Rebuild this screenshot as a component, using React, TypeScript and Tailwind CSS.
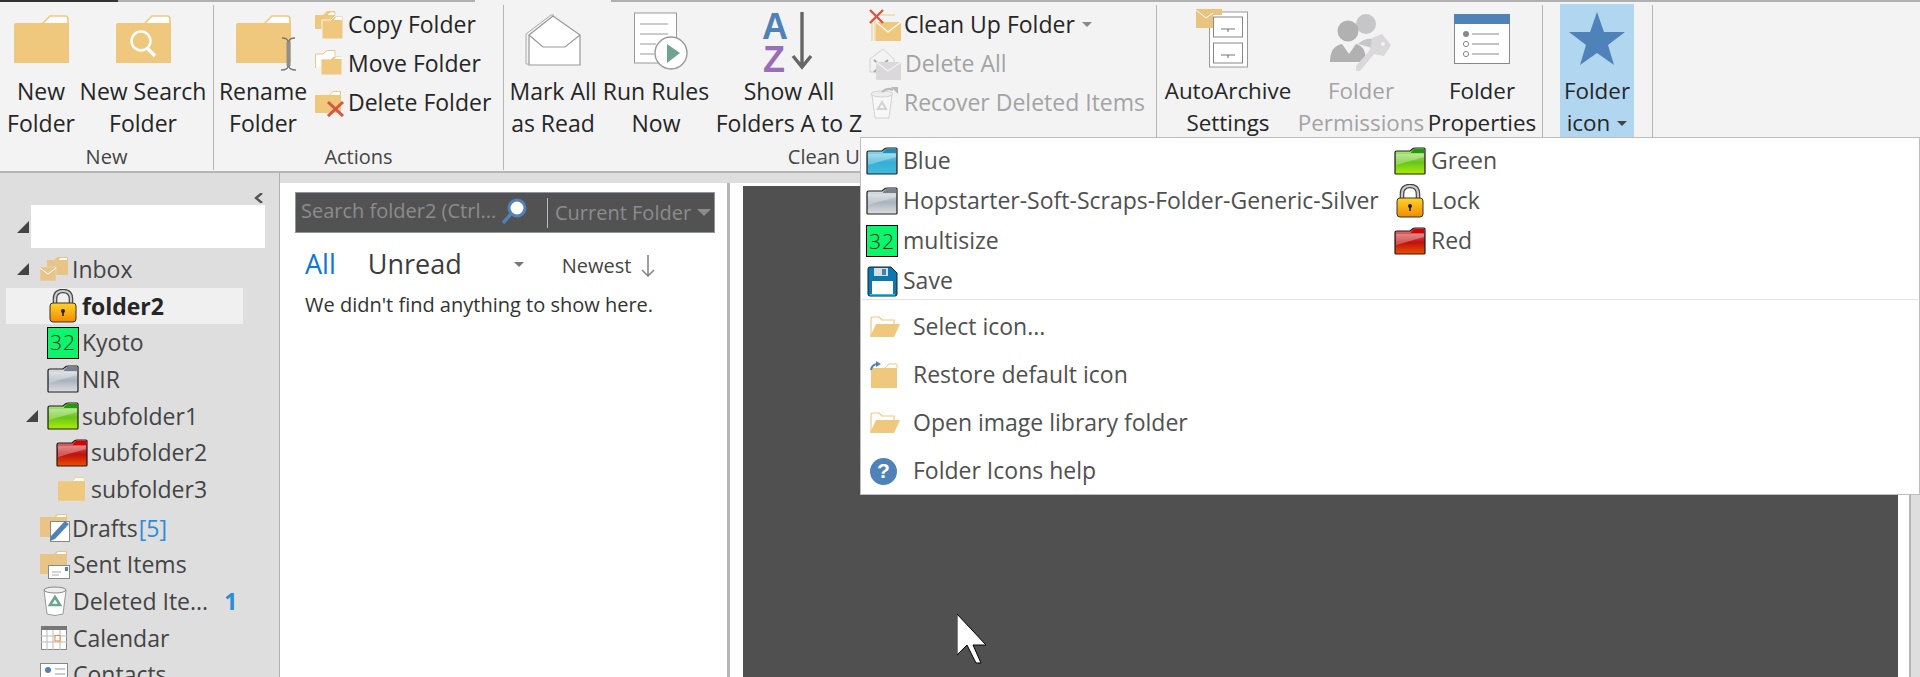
import type { ReactNode } from "react";

const PEACH = "#efc87e";

const Folder = ({ className = "", w = 55, h = 48 }: { className?: string; w?: number; h?: number }) => (
  <svg width={w} height={h} viewBox="0 0 55 48" className={`block flex-none ${className}`}>
    <path d="M28 9 L36 1 H51 Q54 1 54 4 V9 Z" fill="#fff" stroke={PEACH} strokeWidth="1.6" />
    <path d="M0 10 Q0 8 2 8 H55 V48 H0 Z" fill={PEACH} />
  </svg>
);

const palette = {
  blue: { a: "#a8e2f2", b: "#38aed2", c: "#3ebce2", tab: "#1f8fb5" },
  silver: { a: "#e9ecef", b: "#a9b2bc", c: "#dcdfe3", tab: "#77808c" },
  green: { a: "#bdec92", b: "#68c41e", c: "#a8f000", tab: "#1f9a10" },
  red: { a: "#e88080", b: "#bf1010", c: "#ee5000", tab: "#d80000" },
};

const GlossFolder = ({ color, className = "" }: { color: keyof typeof palette; className?: string }) => {
  const p = palette[color];
  const id = `gloss-${color}`;
  return (
    <svg width="32" height="28" viewBox="0 0 32 28" className={`block flex-none ${className}`}>
      <defs>
        <linearGradient id={id} x1="0" y1="0" x2="0" y2="1">
          <stop offset="0" stopColor={p.a} />
          <stop offset="0.55" stopColor={p.b} />
          <stop offset="1" stopColor={p.c} />
        </linearGradient>
      </defs>
      <path d="M1 6 Q1 4 3 4 H16 L19 1.5 Q20 1 21 1 H30 Q31 1 31 2 V26 Q31 27 30 27 H2 Q1 27 1 26 Z" fill={`url(#${id})`} stroke="#1c1c1c" strokeWidth="1.2" />
      <path d="M17 5 L20 2 H30 V6 H17 Z" fill={p.tab} />
      <path d="M2 7 H30 V10 L2 18 Z" fill="#fff" opacity="0.3" />
    </svg>
  );
};

const Lock = ({ className = "" }: { className?: string }) => (
  <svg width="28" height="34" viewBox="0 0 28 34" className={`block flex-none ${className}`}>
    <defs>
      <linearGradient id="lock-body" x1="0" y1="0" x2="0" y2="1">
        <stop offset="0" stopColor="#ffd428" />
        <stop offset="1" stopColor="#f48a00" />
      </linearGradient>
    </defs>
    <path d="M6 15 V10 Q6 2 14 2 Q22 2 22 10 V15" fill="none" stroke="#444" strokeWidth="4.6" />
    <path d="M6 15 V10 Q6 2 14 2 Q22 2 22 10 V15" fill="none" stroke="#c9ccd0" strokeWidth="2.2" />
    <rect x="1" y="14" width="26" height="19" rx="3" fill="url(#lock-body)" stroke="#333" />
    <circle cx="14" cy="22" r="2" fill="#222" />
    <rect x="13.2" y="22" width="1.6" height="5" fill="#222" />
  </svg>
);

const Box32 = () => (
  <div className="flex h-[32px] w-[32px] flex-none items-center justify-center border border-black bg-[#0cf56b] font-['Open_Sans',sans-serif] text-[21px] leading-none font-light tracking-[1px] text-[#032]">
    32
  </div>
);

const Floppy = () => (
  <svg width="31" height="31" viewBox="0 0 31 31" className="block flex-none">
    <path d="M3 1 H24 L30 7 V28 Q30 30 28 30 H3 Q1 30 1 28 V3 Q1 1 3 1 Z" fill="#0c78ad" stroke="#123" />
    <rect x="7" y="2" width="14" height="8" fill="#d9dee3" />
    <rect x="15" y="3" width="4" height="6" fill="#3a86ad" />
    <rect x="5" y="15" width="21" height="13" fill="#fff" />
    <rect x="3" y="28" width="25" height="1.5" fill="#17cbe6" />
  </svg>
);

const OpenFolder = () => (
  <svg width="30" height="22" viewBox="0 0 30 22" className="block flex-none">
    <path d="M1 21 V3 Q1 1 3 1 H9 L12 4 H24 V8" fill="#fff" stroke={PEACH} strokeWidth="1.2" />
    <path d="M6 8 H30 L24 21 H0 Z" fill={PEACH} />
  </svg>
);

const RestoreFolder = () => (
  <svg width="28" height="28" viewBox="0 0 28 28" className="block flex-none">
    <path d="M1 8 Q1 7 3 7 H27 V27 H1 Z" fill={PEACH} />
    <path d="M15 7 L19 3 H26 Q27 3 27 4 V7" fill="#fff" stroke={PEACH} />
    <path d="M1 9 Q2 3 8 3" fill="none" stroke="#4e82b8" strokeWidth="2" />
    <path d="M6 0 L11 3 L6 6 Z" fill="#4e82b8" />
  </svg>
);

const HelpIcon = () => (
  <div className="flex h-[27px] w-[27px] flex-none items-center justify-center rounded-full bg-[#4e82b8] font-['Liberation_Sans',sans-serif] text-[21px] font-bold text-white">
    ?
  </div>
);

const Star = () => (
  <svg width="56" height="53" viewBox="0 0 56 53" className="mt-[7px] block">
    <path d="M28 0 L35 20 H56 L39 33 L45 53 L28 41 L11 53 L17 33 L0 20 H21 Z" fill="#4e82b8" />
  </svg>
);

const SearchFolder = () => (
  <div className="relative mt-[10px]">
    <Folder />
    <svg width="28" height="34" viewBox="0 0 28 34" className="absolute top-[14px] left-[13px]">
      <circle cx="12" cy="12" r="9.5" fill="none" stroke="#fff" strokeWidth="2.4" />
      <path d="M18 19 L26 27" stroke="#fff" strokeWidth="3.6" />
    </svg>
  </div>
);

const RenameIcon = () => (
  <svg width="60" height="56" viewBox="0 0 60 56" className="mt-[10px] ml-[5px] block">
    <path d="M28 9 L36 1 H51 Q54 1 54 4 V9 Z" fill="#fff" stroke={PEACH} strokeWidth="1.6" />
    <path d="M0 10 Q0 8 2 8 H55 V48 H0 Z" fill={PEACH} />
    <path d="M46 23 Q52 23 52 27 V51 Q52 55 45 55 M59 23 Q53 23 53 27 V51 Q53 55 60 55" fill="none" stroke="#777" strokeWidth="1.4" />
    <rect x="50.5" y="27" width="4" height="24" fill="#8f8f8f" />
  </svg>
);

const MarkAllIcon = () => (
  <svg width="56" height="54" viewBox="0 0 56 54" className="mt-[9px] block">
    <path d="M1 20 L26 1 L29 1" fill="none" stroke="#aaa" />
    <path d="M4 21 L28 2 L55 21 V51 H4 Z" fill="#fff" stroke="#999" strokeWidth="1.2" />
    <path d="M4 21 L18 33 H40 L55 21" fill="none" stroke="#999" strokeWidth="1.2" />
    <path d="M1 20 V50 H4" fill="none" stroke="#aaa" />
  </svg>
);

const RunRulesIcon = () => (
  <svg width="56" height="60" viewBox="0 0 56 60" className="mt-[5px] ml-[12px] block">
    <rect x="0.5" y="3" width="42" height="50" fill="#fff" stroke="#999" />
    <path d="M6 14 H34 M6 24 H34 M6 34 H22 M6 44 H20" stroke="#999" />
    <circle cx="37" cy="43" r="16" fill="#fff" stroke="#999" strokeWidth="1.4" />
    <path d="M33 34 L46 43 L33 53 Z" fill="#6fa58f" />
  </svg>
);

const AzIcon = () => (
  <svg width="54" height="78" viewBox="0 -8 54 78" className="-mt-[3px] block">
    <text x="0" y="29" fontFamily="Liberation Sans, sans-serif" fontSize="36" fontWeight="700" fill="#4e82b8">A</text>
    <text x="1" y="62" fontFamily="Liberation Sans, sans-serif" fontSize="36" fontWeight="700" fill="#9a6db8">Z</text>
    <path d="M40 2 V57 M31 46 L40 57 L49 46" fill="none" stroke="#666" strokeWidth="3.4" />
  </svg>
);

const ArchiveIcon = () => (
  <svg width="52" height="62" viewBox="0 0 52 62" className="mt-[2px] mr-[12px] block">
    <rect x="13.5" y="5" width="38" height="55" fill="#fff" stroke="#999" />
    <rect x="17.5" y="10" width="29" height="20" fill="#fff" stroke="#888" />
    <rect x="17.5" y="36" width="29" height="20" fill="#fff" stroke="#888" />
    <path d="M25 22 H39 M25 48 H39" stroke="#777" />
    <path d="M32 22 V25 M32 48 V51" stroke="#666" />
    <path d="M0 2 H26 V8 L17 8 V21 H0 Z" fill="#e9c47e" />
    <path d="M0 3 L10 11 L17 6" fill="none" stroke="#fff" />
  </svg>
);

const PermIcon = () => (
  <svg width="62" height="58" viewBox="0 0 62 58" className="mt-[9px] block">
    <circle cx="36" cy="10" r="10" fill="#c6c5c7" />
    <path d="M28 30 Q36 22 48 26 L42 34 Z" fill="#c6c5c7" />
    <circle cx="18" cy="17" r="10.5" fill="#b1b1b2" />
    <path d="M0 48 Q0 32 12 30 L19 40 L26 30 Q36 32 36 48 Z" fill="#b1b1b2" />
    <path d="M42 24 L52 20 L61 31 L54 42 L44 40 L30 57 H26 L26 52 L40 36 Z" fill="#dad8da" />
    <circle cx="53" cy="30" r="2" fill="#f3f3f3" />
  </svg>
);

const PropsIcon = () => (
  <svg width="56" height="50" viewBox="0 0 56 50" className="mt-[9px] block">
    <rect x="0.5" y="0.5" width="55" height="49" fill="#fff" stroke="#888" />
    <rect x="0" y="0" width="56" height="10" fill="#4e82b8" />
    <circle cx="12" cy="20" r="3" fill="#888" />
    <circle cx="12" cy="30" r="2.6" fill="#fff" stroke="#888" />
    <circle cx="12" cy="40" r="2.6" fill="#fff" stroke="#888" />
    <path d="M18 20 H45 M18 30 H45 M18 40 H45" stroke="#888" />
  </svg>
);

const CopyIcon = () => (
  <svg width="28" height="28" viewBox="0 0 28 28" className="block flex-none">
    <path d="M0 4 H8 L12 0 H20 V4 H20 V18 H0 Z" fill={PEACH} />
    <path d="M12 4 L15 1 H20 V4" fill="#fff" stroke={PEACH} />
    <path d="M7 9 H16 L20 5 H28 V28 H7 Z" fill={PEACH} stroke="#f3f3f3" />
    <path d="M19 9 L21 6 H27 V9 Z" fill="#fff" />
  </svg>
);

const MoveIcon = () => (
  <svg width="28" height="28" viewBox="0 0 28 28" className="block flex-none">
    <path d="M0.5 18 V4 H8 L12 0.5 H20 V8" fill="#fff" stroke={PEACH} />
    <path d="M6 9 H16 L19 6 H27 V25 H6 Z" fill={PEACH} stroke="#f3f3f3" />
    <path d="M19 9 L21 7 H27 V9 Z" fill="#fff" />
  </svg>
);

const DeleteIcon = () => (
  <svg width="30" height="28" viewBox="0 0 30 28" className="block flex-none">
    <path d="M0 6 H14 L18 2 H26 V24 H0 Z" fill={PEACH} />
    <path d="M15 6 L18 3 H25 V6 Z" fill="#fff" />
    <path d="M13 13 L28 27 M28 13 L13 27" stroke="#d6573f" strokeWidth="3" />
  </svg>
);

const CleanUpIcon = () => (
  <svg width="32" height="32" viewBox="0 0 32 32" className="block flex-none">
    <path d="M3 10 V33 M6 9 V33" stroke={PEACH} strokeWidth="1" />
    <path d="M10 6 H26" stroke={PEACH} strokeWidth="1" />
    <rect x="7" y="13" width="25" height="19" fill={PEACH} />
    <path d="M7 13 L19 23 L32 13" fill="none" stroke="#fff" strokeWidth="1.3" />
    <path d="M1 1 L14 14 M14 1 L1 14" stroke="#d6573f" strokeWidth="2.4" />
  </svg>
);

const DeleteAllIcon = () => (
  <svg width="32" height="32" viewBox="0 0 32 32" className="block flex-none">
    <path d="M1 11 L14 1 L25 11 V24 H1 Z" fill="#f3f3f3" stroke="#d4d2d4" />
    <path d="M5 12 L19 24 M19 12 L5 24" stroke="#a8a8a8" strokeWidth="2" />
    <rect x="7" y="14" width="25" height="18" fill="#dad8da" />
    <path d="M7 14 L19 23 L32 14" fill="none" stroke="#f3f3f3" strokeWidth="1.2" />
  </svg>
);

const RecoverIcon = () => (
  <svg width="30" height="32" viewBox="0 0 30 32" className="block flex-none">
    <path d="M3 8 H23 L20 31 H6 Z" fill="#f7f7f7" stroke="#d2d2d2" />
    <ellipse cx="13" cy="7" rx="11" ry="3" fill="#eee" stroke="#d2d2d2" />
    <path d="M9 22 L13 15 L17 22 Z" fill="none" stroke="#d2d2d2" strokeWidth="2" />
    <path d="M13 5 Q18 0 24 3" fill="none" stroke="#b8b8b8" strokeWidth="2.4" />
    <path d="M22 0 H29 V7 Z" fill="#b8b8b8" />
  </svg>
);

const InboxIcon = () => (
  <svg width="28" height="24" viewBox="0 0 28 24" className="block flex-none">
    <path d="M7 3 H14 L17 0 H28 V18 H7 Z" fill="#e8c487" />
    <path d="M19 3 L20 1 H27 V3 Z" fill="#fff" />
    <rect x="0" y="10" width="16" height="14" fill="#e8c487" stroke="#dedede" strokeWidth="0.6" />
    <path d="M0 11 L8 17 L16 11" fill="none" stroke="#fff" />
  </svg>
);

const DraftsIcon = () => (
  <svg width="30" height="28" viewBox="0 0 30 28" className="block flex-none">
    <path d="M0 3 H14 L17 0 H27 V23 H0 Z" fill="#e8c487" />
    <path d="M16 3 L18 1 H26 V3 Z" fill="#fff" />
    <rect x="10.5" y="7.5" width="19" height="20" fill="#fff" stroke="#888" />
    <path d="M10 27 L11 22 L25 7 L29 10 L15 25 Z" fill="#4e82b8" />
  </svg>
);

const SentIcon = () => (
  <svg width="30" height="28" viewBox="0 0 30 28" className="block flex-none">
    <path d="M0 3 H14 L17 0 H27 V23 H0 Z" fill="#e8c487" />
    <path d="M16 3 L18 1 H26 V3 Z" fill="#fff" />
    <rect x="8.5" y="14.5" width="21" height="13" fill="#fff" stroke="#888" />
    <rect x="25" y="16" width="3" height="4" fill="#4e82b8" />
    <path d="M12 21 H21 M12 24 H19" stroke="#aaa" />
  </svg>
);

const TrashIcon = () => (
  <svg width="24" height="30" viewBox="0 0 24 30" className="block flex-none">
    <path d="M1 4 L4 28 Q12 31 20 28 L23 4 Z" fill="#fff" stroke="#999" />
    <ellipse cx="12" cy="4" rx="11" ry="3" fill="#eee" stroke="#888" />
    <path d="M7 19 L12 11 L17 19 Z" fill="none" stroke="#6fa58f" strokeWidth="2.6" />
  </svg>
);

const CalendarIcon = () => (
  <svg width="26" height="24" viewBox="0 0 26 24" className="block flex-none">
    <rect x="0.5" y="0.5" width="25" height="23" fill="#fff" stroke="#888" />
    <rect x="0" y="0" width="26" height="4" fill="#777" />
    <path d="M6 4 V24 M12 4 V24 M19 4 V24 M0 10 H26 M0 16 H26" stroke="#bbb" />
    <rect x="14" y="9.5" width="5" height="5.5" fill="#fff" stroke="#e8873a" />
  </svg>
);

const ContactsIcon = () => (
  <svg width="28" height="24" viewBox="0 0 28 24" className="block flex-none">
    <rect x="0.5" y="0.5" width="27" height="23" fill="#fff" stroke="#888" />
    <circle cx="8" cy="7" r="3" fill="#4e82b8" />
    <path d="M15 6 H25 M15 11 H25" stroke="#999" />
  </svg>
);

const Caret = ({ className = "" }: { className?: string }) => (
  <span className={`inline-block h-0 w-0 border-x-[5px] border-t-[5px] border-x-transparent ${className}`} />
);

const Tri = ({ className = "" }: { className?: string }) => (
  <svg width="12" height="12" viewBox="0 0 12 12" className={`block flex-none ${className}`}>
    <path d="M12 0 V12 H0 Z" fill="#444" />
  </svg>
);

const BigButton = ({ icon, lines, width, muted, caret }: { icon: ReactNode; lines: string[]; width: string; muted?: boolean; caret?: boolean }) => (
  <div className={`flex flex-none flex-col items-center ${width} ${muted ? "text-[#a3a3a3]" : "text-[#262626]"}`}>
    <div className="flex h-[70px] justify-center">{icon}</div>
    {lines.map((line, i) => (
      <div key={line} className="flex items-center gap-[7px] leading-[32px] whitespace-nowrap">
        {line}
        {caret && i === 1 && <Caret className="border-t-[#444]" />}
      </div>
    ))}
  </div>
);

const SmallButton = ({ icon, label, muted, caret, gap = "gap-[5px]" }: { icon: ReactNode; label: string; muted?: boolean; caret?: boolean; gap?: string }) => (
  <div className={`flex h-[39px] items-center whitespace-nowrap ${gap} ${muted ? "text-[#a3a3a3]" : "text-[#262626]"}`}>
    {icon}
    {label}
    {caret && <Caret className="ml-[4px] border-t-[#888]" />}
  </div>
);

const Group = ({ label, width, size = "text-[23px]", children }: { label: string; width: string; size?: string; children: ReactNode }) => (
  <div className={`mt-[3px] flex h-[165px] flex-none flex-col border-r border-[#b5b5b5] ${width} ${size}`}>
    <div className="flex h-[141px]">{children}</div>
    <div className="text-center text-[20px] leading-[26px] text-[#444]">{label}</div>
  </div>
);

const TreeRow = ({ spacer, tri, icon, gap = "gap-[3px]", children, extra }: { spacer: string; tri?: string; icon: ReactNode; gap?: string; children: ReactNode; extra?: string }) => (
  <div className={`flex h-[36.67px] flex-none items-center ${extra ?? ""}`}>
    <div className={`flex-none ${spacer}`}>{tri && <Tri className={tri} />}</div>
    <div className={`flex items-center whitespace-nowrap ${gap}`}>
      {icon}
      {children}
    </div>
  </div>
);

const MenuItem = ({ icon, label }: { icon: ReactNode; label: string }) => (
  <div className="flex h-[40px] items-center gap-[5px] whitespace-nowrap">
    <div className="flex w-[32px] flex-none justify-center">{icon}</div>
    <span className="-mt-[2px]">{label}</span>
  </div>
);

const ActionItem = ({ icon, label }: { icon: ReactNode; label: string }) => (
  <div className="flex h-[48px] items-center whitespace-nowrap">
    <div className="flex w-[43px] flex-none items-center">{icon}</div>
    <span className="-mt-[2px]">{label}</span>
  </div>
);

export default function App() {
  return (
    <div className="relative flex h-[677px] w-[1920px] flex-col overflow-hidden bg-[#f3f3f3] font-['Open_Sans',sans-serif] text-[23px]">
      {/* tab strip edge */}
      <div className="flex h-[2px] flex-none">
        <div className="w-[118px] bg-[#333]" />
        <div className="w-[357px] bg-[#b0b0b0]" />
        <div className="w-[136px] bg-[#f3f3f3]" />
        <div className="flex-1 bg-[#b0b0b0]" />
      </div>

      {/* ribbon */}
      <div className="flex h-[171px] flex-none border-b-2 border-[#b5b5b5] bg-[#f3f3f3]">
        <Group label="New" width="w-[214px]">
          <BigButton width="w-[82px]" lines={["New", "Folder"]} icon={<Folder className="mt-[10px]" />} />
          <BigButton width="w-[122px]" lines={["New Search", "Folder"]} icon={<SearchFolder />} />
        </Group>
        <Group label="Actions" width="w-[290px]">
          <BigButton width="w-[98px]" lines={["Rename", "Folder"]} icon={<RenameIcon />} />
          <div className="ml-[3px] flex flex-col">
            <SmallButton icon={<CopyIcon />} label="Copy Folder" />
            <SmallButton icon={<MoveIcon />} label="Move Folder" />
            <SmallButton icon={<DeleteIcon />} label="Delete Folder" gap="gap-[3px]" />
          </div>
        </Group>
        <Group label="Clean Up" width="w-[653px]">
          <BigButton width="w-[98px]" lines={["Mark All", "as Read"]} icon={<MarkAllIcon />} />
          <BigButton width="w-[108px]" lines={["Run Rules", "Now"]} icon={<RunRulesIcon />} />
          <BigButton width="w-[158px]" lines={["Show All", "Folders A to Z"]} icon={<AzIcon />} />
          <div className="ml-[1px] flex flex-col">
            <SmallButton icon={<CleanUpIcon />} label="Clean Up Folder" caret gap="gap-[3px]" />
            <SmallButton icon={<DeleteAllIcon />} label="Delete All" muted gap="gap-[4px]" />
            <SmallButton icon={<RecoverIcon />} label="Recover Deleted Items" muted />
          </div>
        </Group>
        <Group label="" width="w-[386px]" size="text-[22.4px]">
          <BigButton width="w-[142px]" lines={["AutoArchive", "Settings"]} icon={<ArchiveIcon />} />
          <BigButton width="w-[124px]" lines={["Folder", "Permissions"]} muted icon={<PermIcon />} />
          <BigButton width="w-[118px]" lines={["Folder", "Properties"]} icon={<PropsIcon />} />
        </Group>
        <Group label="" width="w-[110px]" size="text-[22.4px]">
          <div className="-mt-[1px] ml-[17px] h-[134px] w-[74px] bg-[#b1d6f0] pt-[1px]">
            <BigButton width="w-[74px]" lines={["Folder", "icon"]} caret icon={<Star />} />
          </div>
        </Group>
      </div>

      <div className="flex min-h-0 flex-1 bg-[#dedede]">
        {/* folder pane */}
        <div className="flex w-[280px] flex-none flex-col overflow-hidden border-r border-[#b0b0b0] text-[23px] text-[#444]">
          <div className="flex h-[32px] flex-none items-end justify-end pr-[16px] pb-[2px]">
            <svg width="9" height="10" viewBox="0 0 9 10">
              <path d="M8 0 L2 5 L8 10" fill="none" stroke="#555" strokeWidth="2.4" />
            </svg>
          </div>
          <div className="flex h-[43px] flex-none items-center">
            <div className="w-[31px] flex-none">
              <Tri className="ml-[17px]" />
            </div>
            <div className="h-[43px] w-[234px] bg-white" />
          </div>
          <div className="h-[3px] flex-none" />
          <TreeRow spacer="w-[40px]" tri="ml-[17px]" icon={<InboxIcon />} gap="gap-[4px]">Inbox</TreeRow>
          <TreeRow spacer="w-[43px]" extra="ml-[6px] w-[237px] bg-[#f0f0f0] font-bold text-[#262626]" icon={<Lock />} gap="gap-[5px]">folder2</TreeRow>
          <TreeRow spacer="w-[47px]" icon={<Box32 />}>Kyoto</TreeRow>
          <TreeRow spacer="w-[47px]" icon={<GlossFolder color="silver" />}>NIR</TreeRow>
          <TreeRow spacer="w-[47px]" tri="ml-[26px]" icon={<GlossFolder color="green" />}>subfolder1</TreeRow>
          <TreeRow spacer="w-[56px]" icon={<GlossFolder color="red" />}>subfolder2</TreeRow>
          <TreeRow spacer="w-[58px]" icon={<Folder w={27} h={24} />} gap="gap-[6px]">subfolder3</TreeRow>
          <div className="h-[2px] flex-none" />
          <TreeRow spacer="w-[40px]" icon={<DraftsIcon />} gap="gap-[2px]">
            Drafts
            <span className="-ml-px text-[#2a8ddb]">[5]</span>
          </TreeRow>
          <TreeRow spacer="w-[40px]" icon={<SentIcon />} gap="gap-[3px]">Sent Items</TreeRow>
          <TreeRow spacer="w-[43px]" icon={<TrashIcon />} gap="gap-[6px]">
            Deleted Ite...
            <span className="ml-[10px] font-bold text-[#2a8ddb]">1</span>
          </TreeRow>
          <TreeRow spacer="w-[41px]" icon={<CalendarIcon />} gap="gap-[6px]">Calendar</TreeRow>
          <TreeRow spacer="w-[40px]" icon={<ContactsIcon />} gap="gap-[5px]">Contacts</TreeRow>
        </div>

        <div className="mt-[10px] flex min-w-0 flex-1">
          {/* message list */}
          <div className="flex w-[447px] flex-none flex-col bg-white pt-[9px] pr-[12px] pl-[15px]">
            <div className="flex h-[41px] flex-none items-center border border-[#8f96a3] bg-[#525252] pl-[5px] text-[20px] text-[#8c8c8c]">
              <span className="-mt-[4px] w-[199px] flex-none whitespace-nowrap">Search folder2 (Ctrl...</span>
              <svg width="28" height="28" viewBox="0 0 28 28" className="-mt-[4px] flex-none">
                <circle cx="17" cy="11" r="8" fill="#fff" stroke="#4e82b8" strokeWidth="3" />
                <path d="M11 17 L3 26" stroke="#4e82b8" strokeWidth="3.4" />
              </svg>
              <div className="mr-[7px] ml-[19px] h-[30px] w-px flex-none bg-[#bbb]" />
              <span className="whitespace-nowrap">Current Folder</span>
              <Caret className="ml-[6px] border-x-[7px] border-t-[7px] border-t-[#8c8c8c]" />
            </div>
            <div className="mt-[9px] flex h-[44px] flex-none items-center pl-[10px]">
              <span className="text-[27px] text-[#0a78d4]">All</span>
              <span className="ml-[32px] text-[27px] text-[#3c3c3c]">Unread</span>
              <Caret className="ml-[52px] border-t-[#777]" />
              <span className="mt-[3px] ml-[38px] text-[20px] text-[#444]">Newest</span>
              <svg width="14" height="22" viewBox="0 0 14 22" className="mt-[3px] ml-[10px] flex-none">
                <path d="M7 0 V21 M1 15 L7 21 L13 15" fill="none" stroke="#888" strokeWidth="1.6" />
              </svg>
            </div>
            <div className="mt-[1px] pl-[10px] text-[20px] leading-[36px] text-[#333]">We didn't find anything to show here.</div>
          </div>

          <div className="w-[3px] flex-none bg-[#b5b5b5]" />

          {/* reading pane */}
          <div className="flex w-[1179px] flex-none bg-white pt-[3px] pr-[11px] pl-[13px]">
            <div className="flex-1 bg-[#505050]" />
          </div>
          <div className="w-[2px] flex-none bg-[#b5b5b5]" />
        </div>
      </div>

      {/* folder icon menu */}
      <div className="absolute top-[137px] left-[860px] h-[358px] w-[1060px] border border-[#bdbdbd] bg-white text-[23px] text-[#505050]">
        <div className="grid grid-cols-[528px_1fr] pt-[3px] pl-[5px]">
          <MenuItem icon={<GlossFolder color="blue" />} label="Blue" />
          <MenuItem icon={<GlossFolder color="green" />} label="Green" />
          <MenuItem icon={<GlossFolder color="silver" />} label="Hopstarter-Soft-Scraps-Folder-Generic-Silver" />
          <MenuItem icon={<Lock />} label="Lock" />
          <MenuItem icon={<Box32 />} label="multisize" />
          <MenuItem icon={<GlossFolder color="red" />} label="Red" />
          <MenuItem icon={<Floppy />} label="Save" />
        </div>
        <div className="mx-[1px] -mt-[2px] h-px bg-[#e2e2e2]" />
        <div className="mt-[3px] flex flex-col pl-[9px]">
          <ActionItem icon={<OpenFolder />} label="Select icon..." />
          <ActionItem icon={<RestoreFolder />} label="Restore default icon" />
          <ActionItem icon={<OpenFolder />} label="Open image library folder" />
          <ActionItem icon={<HelpIcon />} label="Folder Icons help" />
        </div>
      </div>

      {/* mouse pointer */}
      <svg width="30" height="50" viewBox="0 0 30 50" className="absolute top-[614px] left-[957px]">
        <path d="M0 0 V41 L10 31 L19 49 H24 L16 31 H29 Z" fill="#fff" stroke="#000" strokeWidth="1" />
      </svg>
    </div>
  );
}
